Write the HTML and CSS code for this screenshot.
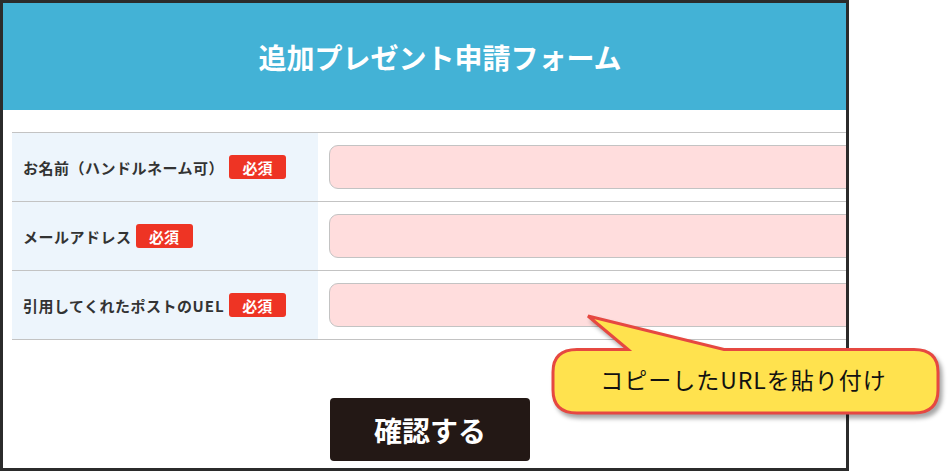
FILE: index.html
```html
<!DOCTYPE html>
<html lang="ja">
<head>
<meta charset="utf-8">
<link rel="stylesheet" href="styles.css">
</head>
<body>
<div class="page">
  <div class="frame">
    <div class="inner">
      <header class="head"><h1 class="title">追加プレゼント申請フォーム</h1></header>
      <div class="table">
        <div class="row">
          <div class="label"><span class="ltext">お名前（ハンドルネーム可）</span><span class="req req-wide">必須</span></div>
          <div class="field"><div class="input"></div></div>
        </div>
        <div class="row">
          <div class="label"><span class="ltext">メールアドレス</span><span class="req">必須</span></div>
          <div class="field"><div class="input"></div></div>
        </div>
        <div class="row">
          <div class="label"><span class="ltext">引用してくれたポストの<span class="latin">UEL</span></span><span class="req">必須</span></div>
          <div class="field"><div class="input"></div></div>
        </div>
      </div>
      <div class="actions"><button class="btn">確認する</button></div>
    </div>
  </div>
  <div class="callout">
    <svg class="callout-shape" width="409" height="130" viewBox="0 0 409 130">
      <path d="M 88 49.5 L 48 16 L 184 49.5 L 374 49.5 Q 398 49.5 398 72 L 398 90 Q 398 113 374 113 L 37 113 Q 13 113 13 90 L 13 72 Q 13 49.5 37 49.5 Z" fill="#ffe24e" stroke="#e64841" stroke-width="3" stroke-linejoin="miter"/>
    </svg>
    <span class="callout-text">コピーしたURLを貼り付け</span>
  </div>
</div>
</body>
</html>
```

FILE: styles.css
```css
* { box-sizing: border-box; }
html, body { margin: 0; padding: 0; background: #fff; }
body { font-family: "Noto Sans CJK JP", "Noto Sans", sans-serif; }
.page { position: relative; width: 949px; height: 471px; overflow: hidden; }
.frame {
  width: 849px;
  height: 471px;
  border: 3px solid #2b2b2b;
  overflow: hidden;
}
.inner { width: 874px; }
.head {
  height: 107px;
  background: #43b2d6;
  display: flex;
  align-items: center;
  justify-content: center;
}
.title {
  margin: 0;
  color: #fff;
  font-size: 28px;
  font-weight: 700;
  line-height: 1;
}
.table {
  margin: 22px 0 0 9px;
  border-top: 1px solid #c3c3c3;
}
.row {
  display: flex;
  height: 69px;
  border-bottom: 1px solid #c3c3c3;
}
.label {
  width: 306px;
  flex: none;
  background: #edf5fc;
  display: flex;
  align-items: center;
  padding-left: 11px;
  color: #333;
  font-size: 15px;
  font-weight: 700;
}
.ltext { letter-spacing: 0.5px; }
.latin { letter-spacing: 1px; }
.req {
  display: inline-flex;
  align-items: center;
  justify-content: center;
  width: 57px;
  height: 24px;
  margin-left: 4px;
  background: #ee3424;
  color: #fff;
  border-radius: 3px;
  font-size: 15px;
  font-weight: 700;
  letter-spacing: 0;
}
.req-wide { margin-left: 5px; }
.field {
  flex: 1;
  padding: 12px 0 0 11px;
}
.input {
  height: 44px;
  background: #ffdddd;
  border: 1px solid #c3c3c3;
  border-radius: 9px;
}
.actions {
  padding: 58px 0 0 327px;
}
.btn {
  width: 200px;
  height: 63px;
  border: none;
  border-radius: 4px;
  background: #231815;
  color: #fff;
  font-family: "Noto Sans CJK JP", sans-serif;
  font-size: 28px;
  font-weight: 700;
  padding: 0;
}
.callout {
  position: absolute;
  left: 540px;
  top: 300px;
  width: 409px;
  height: 130px;
}
.callout-shape {
  display: block;
  filter: drop-shadow(3px 4px 2px rgba(0,0,0,0.35));
}
.callout-text {
  position: absolute;
  left: 11px;
  width: 385px;
  top: 64px;
  text-align: center;
  font-size: 23px;
  line-height: 30px;
  color: #111;
  letter-spacing: 1px;
}
```
